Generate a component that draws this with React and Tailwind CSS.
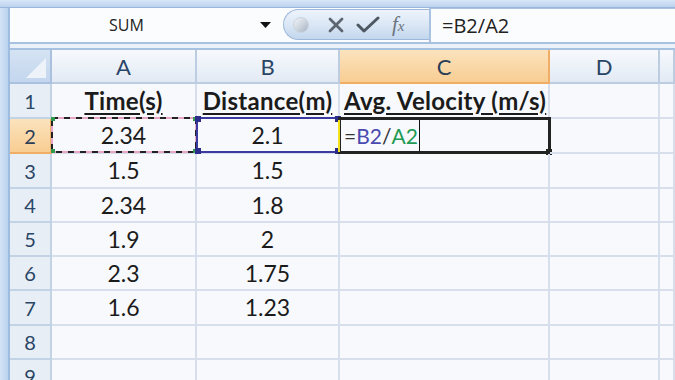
import React from "react";

const rowHeights = [35, 35, 35, 34, 34, 34, 35, 34, 34];

const data = [
  ["Time(s)", "Distance(m)", "Avg. Velocity (m/s)"],
  ["2.34", "2.1", ""],
  ["1.5", "1.5", ""],
  ["2.34", "1.8", ""],
  ["1.9", "2", ""],
  ["2.3", "1.75", ""],
  ["1.6", "1.23", ""],
  ["", "", ""],
  ["", "", ""],
];

const cols = ["A", "B", "C", "D"];

function Corner() {
  return (
    <div className="relative bg-gradient-to-b from-[#d5e3f3] to-[#c3d6ee] border-r-2 border-b-2 border-[#a9c1de]">
      <svg className="absolute right-[4px] bottom-[4px]" width="20" height="20" viewBox="0 0 20 20">
        <polygon points="20,0 20,20 0,20" fill="#eef3fa" />
      </svg>
    </div>
  );
}

function ColHeader({ label, active }) {
  return (
    <div
      className={
        "flex items-center justify-center text-[22px] border-r-2 border-b-2 " +
        (active
          ? "bg-gradient-to-b from-[#fbe3bd] to-[#f8cd92] border-[#f0ad66] text-[#2a3e58]"
          : "bg-gradient-to-b from-[#f7f9fd] to-[#e2eaf4] border-[#bccde2] text-[#2a4565]")
      }
    >
      {label}
    </div>
  );
}

function RowHeader({ n, active }) {
  return (
    <div
      className={
        "flex items-center justify-center text-[20px] border-r-2 border-b-2 " +
        (active
          ? "bg-gradient-to-b from-[#fbe3bd] to-[#f8cd92] border-[#f0ad66] text-[#2a3e58]"
          : "bg-[#e8eef6] border-[#c3d3e6] text-[#2a4565]")
      }
    >
      {n}
    </div>
  );
}

function Cell({ children, className = "" }) {
  return (
    <div className={"relative flex items-center border-r-2 border-b-2 border-[#d6dfeb] text-[#1b1b1b] " + className}>
      {children}
    </div>
  );
}

function MarchingAnts() {
  return (
    <svg className="absolute -left-[1px] -top-[2px] overflow-visible" width="146" height="36" viewBox="0 0 146 36">
      <rect x="1" y="1" width="144" height="34" fill="none" stroke="#3aa35a" strokeWidth="2" />
      <rect x="1" y="1" width="144" height="34" fill="none" stroke="#e6a6c6" strokeWidth="2" strokeDasharray="6 6" strokeDashoffset="6" />
      <rect x="1" y="1" width="144" height="34" fill="none" stroke="#222" strokeWidth="2" strokeDasharray="6 6" />
      <rect x="0" y="0" width="4" height="4" fill="#2f9a4e" />
      <rect x="0" y="32" width="4" height="4" fill="#2f9a4e" />
      <rect x="142" y="0" width="4" height="4" fill="#2f9a4e" />
      <rect x="142" y="32" width="4" height="4" fill="#2f9a4e" />
    </svg>
  );
}

function BlueBox() {
  return (
    <div className="absolute -left-[1px] -top-[2px] w-[144px] h-[36px] border-2 border-[#3a3aa0]">
      <div className="absolute -left-[3px] -top-[3px] w-[6px] h-[6px] bg-[#2b2b8c]" />
      <div className="absolute -left-[3px] -bottom-[3px] w-[6px] h-[6px] bg-[#2b2b8c]" />
      <div className="absolute -right-[3px] -top-[3px] w-[6px] h-[6px] bg-[#2b2b8c]" />
      <div className="absolute -right-[3px] -bottom-[3px] w-[6px] h-[6px] bg-[#2b2b8c]" />
    </div>
  );
}

export default function App() {
  return (
    <div className="w-[675px] h-[380px] overflow-hidden bg-[#c6daf1] flex flex-col" style={{ fontFamily: "Lato, 'Open Sans', sans-serif" }}>
      {/* top band */}
      <div className="h-[8px] shrink-0 bg-gradient-to-b from-[#d7e6f7] to-[#bcd2ee] border-b border-[#99b7dc]" />
      <div className="flex flex-1 min-h-0">
        {/* left band */}
        <div className="w-[10px] shrink-0 bg-gradient-to-r from-[#d3e3f6] to-[#bcd3ee] border-r-2 border-[#9ebbe0]" />
        <div className="flex-1 flex flex-col min-w-0">
          {/* formula bar */}
          <div className="h-[34px] shrink-0 flex bg-[#fbfcfe]">
            <div className="w-[273px] flex items-center relative" style={{ fontFamily: "'Open Sans', sans-serif" }}>
              <span className="ml-[99px] text-[16px] text-[#222]">SUM</span>
              <svg className="absolute left-[250px] top-[14px]" width="11" height="7" viewBox="0 0 11 7">
                <polygon points="0,0 11,0 5.5,6" fill="#111" />
              </svg>
            </div>
            <div className="w-[146px] flex items-center rounded-l-[16px] border border-r-0 border-[#9db8da] bg-gradient-to-b from-[#edf3fb] via-[#dbe7f5] to-[#c3d7ee] mt-[1px] mb-[2px]">
              <div className="ml-[9px] w-[16px] h-[16px] rounded-full bg-gradient-to-br from-[#f4f6f9] to-[#a9b5c4] border border-[#c9d3df]" />
              <svg className="ml-[19px]" width="16" height="16" viewBox="0 0 16 16">
                <path d="M2 2 L14 14 M14 2 L2 14" stroke="#5d6670" strokeWidth="2.8" strokeLinecap="round" />
              </svg>
              <svg className="ml-[12px]" width="24" height="18" viewBox="0 0 24 18">
                <path d="M2 9 L8 15 L22 2" stroke="#4e5863" strokeWidth="3" fill="none" strokeLinejoin="round" strokeLinecap="round" />
              </svg>
              <span className="ml-[12px] text-[21px] italic text-[#6a7480]" style={{ fontFamily: "'Liberation Serif', serif" }}>
                f<span className="text-[15px]">x</span>
              </span>
            </div>
            <div className="flex-1 flex items-center border-l-2 border-[#a9c2e0] border-t border-t-[#a9c2e0] pl-[11px] text-[20px] text-[#222]" style={{ fontFamily: "'Open Sans', sans-serif" }}>
              =B2/A2
            </div>
          </div>
          {/* separator */}
          <div className="h-[8px] shrink-0 bg-[#eaf1f9] border-t-2 border-b-2 border-[#a7c1e0]" />
          {/* grid */}
          <div
            className="grid bg-[#f7f9fc] flex-1"
            style={{
              gridTemplateColumns: "42px 145px 143px 210px 110px 1fr",
              gridTemplateRows: "34px " + rowHeights.map((h) => h + "px").join(" "),
            }}
          >
            <Corner />
            {cols.map((c) => (
              <ColHeader key={c} label={c} active={c === "C"} />
            ))}
            <ColHeader label="" />

            {data.map((row, i) => (
              <React.Fragment key={i}>
                <RowHeader n={i + 1} active={i === 1} />
                {i === 0 ? (
                  <>
                    <Cell className="justify-center text-[24px] font-bold underline underline-offset-[3px] tracking-[0.3px]">{row[0]}</Cell>
                    <Cell className="justify-center text-[24px] font-bold underline underline-offset-[3px] tracking-[0.3px]">{row[1]}</Cell>
                    <Cell className="pl-[4px] text-[24px] font-bold underline underline-offset-[3px] whitespace-nowrap tracking-[0.3px]">{row[2]}</Cell>
                  </>
                ) : i === 1 ? (
                  <>
                    <Cell className="justify-center text-[23px]">
                      {row[0]}
                      <MarchingAnts />
                    </Cell>
                    <Cell className="justify-center text-[23px]">
                      {row[1]}
                      <BlueBox />
                    </Cell>
                    <Cell className="pl-[4px] text-[21px]">
                      <span className="text-[#333]">=</span>
                      <span className="text-[#4a4ab0]">B2</span>
                      <span className="text-[#333]">/</span>
                      <span className="text-[#219a55]">A2</span>
                      <span className="w-[1px] self-stretch bg-[#111] ml-[1px]" />
                      <div className="absolute -left-[2px] -top-[2px] w-[213px] h-[37px] border-[3px] border-[#222]">
                        <div className="absolute -right-[4px] -bottom-[4px] w-[6px] h-[6px] bg-[#222]" />
                      </div>
                      <div className="absolute -left-[2px] top-[1px] w-[2px] h-[32px] bg-[#f2e21a]" />
                    </Cell>
                  </>
                ) : (
                  <>
                    <Cell className="justify-center text-[23px]">{row[0]}</Cell>
                    <Cell className="justify-center text-[23px]">{row[1]}</Cell>
                    <Cell>{row[2]}</Cell>
                  </>
                )}
                <Cell />
                <Cell />
              </React.Fragment>
            ))}
          </div>
        </div>
      </div>
    </div>
  );
}
